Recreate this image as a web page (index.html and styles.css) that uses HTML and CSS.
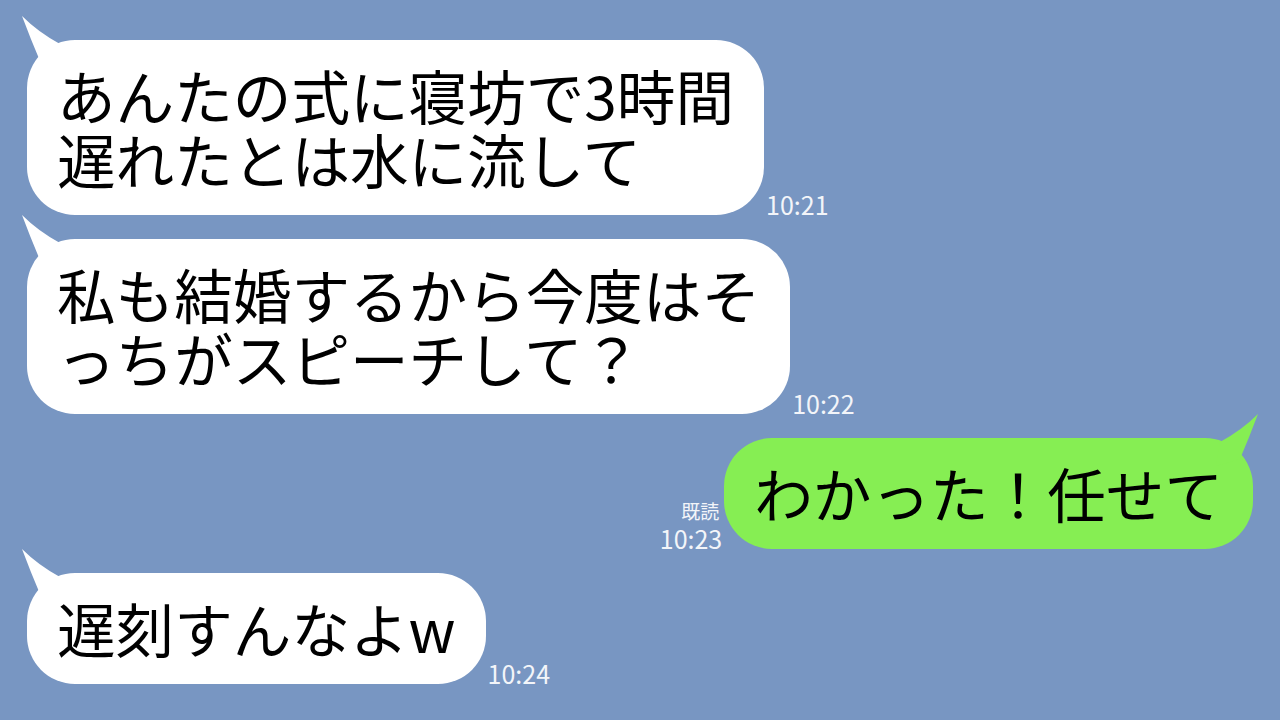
FILE: index.html
```html
<!DOCTYPE html>
<html lang="ja">
<head>
    <meta charset="UTF-8">
    <meta name="viewport" content="width=device-width, initial-scale=1.0">
    <title>トーク</title>
    <link rel="stylesheet" href="styles.css">
</head>
<body>
    <div class="chat">

        <!-- 相手: 1 -->
        <div class="row left">
            <div class="bubble white">
                <svg class="tail" viewBox="0 0 44 54" width="44" height="54">
                    <path d="M0 0 Q9 24 18 45 L42 52 L38 28 Q16 16 0 0 Z" />
                </svg>
                <span class="line">あんたの式に寝坊で3時間</span>
                <span class="line">遅れたとは水に流して</span>
            </div>
            <div class="meta">
                <span class="time">10:21</span>
            </div>
        </div>

        <!-- 相手: 2 -->
        <div class="row left">
            <div class="bubble white">
                <svg class="tail" viewBox="0 0 44 54" width="44" height="54">
                    <path d="M0 0 Q9 24 18 45 L42 52 L38 28 Q16 16 0 0 Z" />
                </svg>
                <span class="line">私も結婚するから今度はそ</span>
                <span class="line">っちがスピーチして？</span>
            </div>
            <div class="meta">
                <span class="time">10:22</span>
            </div>
        </div>

        <!-- 自分 -->
        <div class="row right">
            <div class="meta">
                <span class="read">既読</span>
                <span class="time">10:23</span>
            </div>
            <div class="bubble green">
                <svg class="tail" viewBox="0 0 44 54" width="44" height="54">
                    <path d="M0 0 Q9 24 18 45 L42 52 L38 28 Q16 16 0 0 Z" />
                </svg>
                <span class="line">わかった！任せて</span>
            </div>
        </div>

        <!-- 相手: 3 -->
        <div class="row left">
            <div class="bubble white">
                <svg class="tail" viewBox="0 0 44 54" width="44" height="54">
                    <path d="M0 0 Q9 24 18 45 L42 52 L38 28 Q16 16 0 0 Z" />
                </svg>
                <span class="line">遅刻すんなよw</span>
            </div>
            <div class="meta">
                <span class="time">10:24</span>
            </div>
        </div>

    </div>
</body>
</html>
```

FILE: styles.css
```css
/* General Styles */
body {
    margin: 0;
    padding: 0;
    width: 1280px;
    height: 720px;
    overflow: hidden;
    background: #7896c2;
    font-family: "Noto Sans CJK JP", "Noto Sans", sans-serif;
    color: #000;
}

.chat {
    display: flex;
    flex-direction: column;
    gap: 24px;
    padding: 40px 27px 0 27px;
}

.row {
    display: flex;
    align-items: flex-end;
    gap: 2px;
}

.row.left {
    justify-content: flex-start;
}

.row.right {
    justify-content: flex-end;
}

/* Bubbles */
.bubble {
    position: relative;
    padding: 23px 30px 24px 30px;
    font-size: 58.6px;
    border-radius: 48px;
    white-space: nowrap;
}

.line {
    display: block;
    height: 64px;
    line-height: 64px;
}

.bubble.white {
    background: #fff;
}

.bubble.green {
    background: #86ee53;
}

.tail {
    position: absolute;
    top: -24px;
    left: -5px;
}

.white .tail {
    fill: #fff;
}

.green .tail {
    fill: #86ee53;
    left: auto;
    right: -5px;
    transform: scaleX(-1);
}

/* Read mark + time */
.meta {
    display: flex;
    flex-direction: column;
    align-items: flex-end;
    color: #f3f5f9;
    margin-bottom: -2px;
}

.time {
    font-size: 25px;
    line-height: 26px;
}

.read {
    font-size: 19px;
    line-height: 22px;
    margin-bottom: 3px;
    margin-right: 3px;
}
```
